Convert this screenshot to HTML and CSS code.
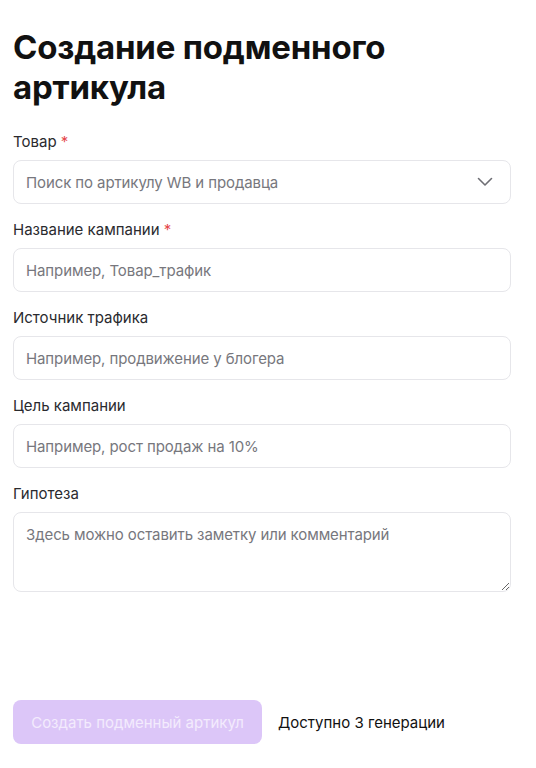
FILE: index.html
```html
<!DOCTYPE html>
<html lang="ru">
<head>
<meta charset="utf-8">
<link rel="stylesheet" href="styles.css">
</head>
<body>
<div class="page">
  <h1 class="title">Создание подменного артикула</h1>
  <form class="form">
    <div class="field">
      <label class="label">Товар <span class="req">*</span></label>
      <div class="select">
        <span class="placeholder">Поиск по артикулу WB и продавца</span>
        <svg class="chevron" width="16" height="10" viewBox="0 0 16 10"><path d="M1.5 1.5 L8 8 L14.5 1.5" fill="none" stroke="#6e6e74" stroke-width="1.6" stroke-linecap="round" stroke-linejoin="round"/></svg>
      </div>
    </div>
    <div class="field">
      <label class="label">Название кампании <span class="req">*</span></label>
      <input class="input" placeholder="Например, Товар_трафик">
    </div>
    <div class="field">
      <label class="label">Источник трафика</label>
      <input class="input" placeholder="Например, продвижение у блогера">
    </div>
    <div class="field">
      <label class="label">Цель кампании</label>
      <input class="input" placeholder="Например, рост продаж на 10%">
    </div>
    <div class="field">
      <label class="label">Гипотеза</label>
      <textarea class="textarea" placeholder="Здесь можно оставить заметку или комментарий"></textarea>
    </div>
  </form>
  <div class="actions">
    <button class="btn" disabled>Создать подменный артикул</button>
    <span class="note">Доступно 3 генерации</span>
  </div>
</div>
</body>
</html>
```
FILE: styles.css
```css
* { box-sizing: border-box; }
html, body { margin: 0; padding: 0; background: #fff; }
body { font-family: Inter, "Noto Sans", sans-serif; color: #1a1a1c; }
.page { padding: 27px 25px 0 13px; width: 536px; }
.title {
  margin: 0;
  font-size: 33px;
  line-height: 40px;
  font-weight: 700;
  letter-spacing: -0.2px;
  color: #111;
}
.form { display: flex; flex-direction: column; gap: 16px; margin-top: 25px; }
.field { display: flex; flex-direction: column; gap: 8px; }
.label { font-size: 15px; line-height: 20px; color: #2a2a2e; }
.req { color: #e5484d; }
.select, .input, .textarea {
  width: 498px;
  border: 1px solid #e6e6ea;
  border-radius: 8px;
  background: #fff;
  font-family: inherit;
  font-size: 15px;
  color: #1a1a1c;
}
.select {
  height: 44px;
  display: flex;
  align-items: center;
  justify-content: space-between;
  padding: 0 17px 0 12px;
}
.placeholder { color: #77777d; letter-spacing: -0.1px; }
.input { height: 44px; padding: 0 12px; outline: none; letter-spacing: -0.1px; }
.input::placeholder, .textarea::placeholder { color: #77777d; opacity: 1; }
.textarea {
  height: 80px;
  padding: 12px 12px;
  resize: vertical;
  outline: none;
  line-height: 20px;
  display: block;
  letter-spacing: -0.1px;
}
.actions { display: flex; align-items: center; gap: 16px; margin-top: 108px; }
.btn {
  height: 44px;
  width: 249px;
  border: none;
  border-radius: 8px;
  background: #dcc6f8;
  color: #f3ebfd;
  font-family: inherit;
  font-size: 15px;
  padding: 0;
}
.note { font-size: 15px; color: #111; }
```
